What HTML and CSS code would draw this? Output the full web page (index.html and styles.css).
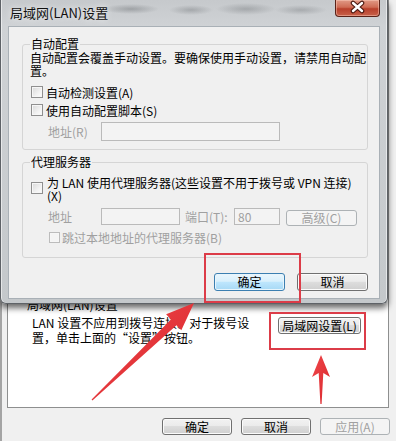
FILE: index.html
```html
<!DOCTYPE html>
<html lang="zh-CN">
<head>
<meta charset="utf-8">
<title>局域网(LAN)设置</title>
<link rel="stylesheet" href="styles.css">
</head>
<body>
<div class="screen">
  <div class="bgwin">
    <div class="panel">
      <div class="lan-title">局域网(LAN)设置</div>
      <div class="lan-row">
        <p class="lan-text">LAN 设置不应用到拨号连接。对于拨号设<br>置，单击上面的“设置”按钮。</p>
        <span class="btn lan-btn">局域网设置(L)</span>
      </div>
    </div>
    <div class="footer">
      <span class="btn foot-btn">确定</span>
      <span class="btn foot-btn">取消</span>
      <span class="btn foot-btn disabled">应用(A)</span>
    </div>
  </div>

  <div class="dialog">
    <div class="titlebar">
      <span class="title">局域网(LAN)设置</span>
      <span class="close">
        <svg width="45" height="17" viewBox="0 0 45 17">
          <path d="M18 4 L27 12 M27 4 L18 12" stroke="#4a1810" stroke-width="4.6" stroke-linecap="round" fill="none"/>
          <path d="M18 4 L27 12 M27 4 L18 12" stroke="#ffffff" stroke-width="2.4" stroke-linecap="round" fill="none"/>
        </svg>
      </span>
    </div>
    <div class="client">
      <fieldset class="group g1">
        <legend>自动配置</legend>
        <p class="desc">自动配置会覆盖手动设置。要确保使用手动设置，请禁用自动配<br>置。</p>
        <div class="check first"><span class="box"></span><span>自动检测设置(A)</span></div>
        <div class="check"><span class="box"></span><span>使用自动配置脚本(S)</span></div>
        <div class="field-row addr-row">
          <span class="lbl dim">地址(R)</span><span class="input w-addr"></span>
        </div>
      </fieldset>
      <fieldset class="group g2">
        <legend>代理服务器</legend>
        <div class="check two"><span class="box"></span><span>为 LAN 使用代理服务器(这些设置不用于拨号或 VPN 连接)<br>(X)</span></div>
        <div class="field-row proxy-row">
          <span class="lbl dim">地址</span><span class="input w-proxy"></span>
          <span class="lbl dim port-lbl">端口(T):</span><span class="input w-port">80</span>
          <span class="btn adv disabled">高级(C)</span>
        </div>
        <div class="check sub dim"><span class="box off"></span><span>跳过本地地址的代理服务器(B)</span></div>
      </fieldset>
      <div class="actions">
        <span class="btn dlg-btn default">确定</span>
        <span class="btn dlg-btn">取消</span>
      </div>
    </div>
  </div>

  <div class="mark mark-ok"></div>
  <div class="mark mark-lan"></div>

  <svg class="arrows" width="396" height="441" viewBox="0 0 396 441">
    <defs>
      <linearGradient id="rg" x1="0" y1="0" x2="1" y2="1">
        <stop offset="0" stop-color="#f0474a"/>
        <stop offset="1" stop-color="#d8262c"/>
      </linearGradient>
    </defs>
    <polygon fill="url(#rg)" points="194,303 181.3,330.3 176.5,325.2 92.4,400.5 91.6,399.5 170.9,319.4 166.1,314.3"/>
    <polygon fill="url(#rg)" points="321,355 330,377 323.3,373 321.6,404 320.4,404 318.7,373 312,377"/>
  </svg>
</div>
</body>
</html>
```

FILE: styles.css
```css
* { box-sizing: border-box; }

html, body {
  margin: 0;
  padding: 0;
}

body {
  width: 396px;
  height: 441px;
  overflow: hidden;
  background: #e6e6e6;
  font-family: "Noto Sans CJK SC", "Liberation Sans", sans-serif;
  font-size: 12px;
  color: #000;
}

.screen {
  position: relative;
  width: 396px;
  height: 441px;
  overflow: hidden;
}

/* ---------- background window (Internet options) ---------- */
.bgwin {
  position: absolute;
  inset: 0;
  background: #f0f0f0;
  border-left: 2px solid #a4a4a4;
  display: flex;
  flex-direction: column;
}

.panel {
  margin-left: 5px;
  width: 382px;
  height: 408px;
  flex: none;
  background: #fff;
  border: 1px solid #8e8f8f;
  border-top: 0;
  padding: 298px 0 0 19px;
}

.lan-title {
  line-height: 14px;
  color: #000;
}

.lan-row {
  display: flex;
  align-items: flex-start;
  padding-left: 5px;
  margin-top: 3px;
  margin-right: 27px;
}

.lan-text {
  margin: 0;
  line-height: 15px;
  white-space: nowrap;
}

.lan-btn {
  margin-left: auto;
  margin-top: 2px;
  width: 83px;
  height: 17px;
}

.footer {
  display: flex;
  justify-content: flex-end;
  gap: 9px;
  padding: 10px 6px 0 0;
}

.foot-btn {
  width: 70px;
  height: 17px;
}

/* ---------- buttons ---------- */
.btn {
  display: inline-flex;
  align-items: center;
  justify-content: center;
  flex: none;
  font-size: 12px;
  line-height: 1;
  color: #000;
  border: 1px solid #707070;
  border-radius: 3px;
  background: linear-gradient(#f2f2f2 0%, #ebebeb 46%, #dddddd 50%, #cfcfcf 100%);
  box-shadow: inset 0 0 0 1px #fbfbfb;
  white-space: nowrap;
}

.btn.disabled {
  color: #a0a0a0;
  border-color: #adb2b5;
  background: #f4f4f4;
  box-shadow: none;
}

.btn.default {
  border-color: #3c7fb1;
  background: linear-gradient(#eaf6fd 0%, #d9f0fc 46%, #bee6fd 50%, #a7d9f5 100%);
  box-shadow: inset 0 0 0 1px #e8f5fc;
}

/* ---------- dialog ---------- */
.dialog {
  position: absolute;
  left: 0;
  top: 0;
  width: 388px;
  height: 304px;
  display: flex;
  flex-direction: column;
  padding: 0 7px 4px 7px;
  border: 1px solid #5e6267;
  border-top: 0;
  border-radius: 0 0 6px 6px;
  background:
    radial-gradient(ellipse 28px 5px at 130px 9px, rgba(80, 84, 88, 0.35), transparent),
    radial-gradient(ellipse 22px 5px at 190px 10px, rgba(80, 84, 88, 0.3), transparent),
    radial-gradient(ellipse 30px 6px at 245px 9px, rgba(80, 84, 88, 0.3), transparent),
    radial-gradient(ellipse 26px 5px at 300px 10px, rgba(80, 84, 88, 0.28), transparent),
    linear-gradient(180deg, #c6c9cc 0px, #cfd2d5 26px, #c4c8cb 100%);
  box-shadow:
    inset 1px 0 0 rgba(255, 255, 255, 0.55),
    inset -1px 0 0 rgba(255, 255, 255, 0.55),
    0 4px 6px rgba(0, 0, 0, 0.6);
}

.titlebar {
  height: 26px;
  flex: none;
  display: flex;
  align-items: flex-start;
  justify-content: space-between;
}

.title {
  padding-left: 2px;
  font-size: 13px;
  line-height: 26px;
  color: #111;
  text-shadow: 0 0 6px rgba(255, 255, 255, 0.9);
}

.close {
  display: block;
  width: 45px;
  height: 17px;
  border: 1px solid #5a2218;
  border-top: 0;
  border-radius: 0 0 4px 4px;
  background: linear-gradient(#e19a86 0%, #cf6c55 45%, #b8402b 55%, #c8614a 100%);
  box-shadow: inset 0 0 0 1px rgba(255, 210, 195, 0.45);
}

.close svg {
  display: block;
  margin: -1px 0 0 -1px;
}

.client {
  flex: 1;
  background: #f0f0f0;
  border: 1px solid #a9b0b6;
  padding: 10px 11px 0 13px;
  display: flex;
  flex-direction: column;
}

.group {
  margin: 0;
  border: 1px solid #d5d5d5;
  border-radius: 3px;
  padding: 0 8px 8px 7px;
  min-width: 0;
}

.group legend {
  padding: 0 1px;
  line-height: 14px;
  font-size: 12px;
}

.g2 {
  margin-top: 5px;
  padding-bottom: 11px;
}

.desc {
  margin: 0;
  line-height: 13px;
  white-space: nowrap;
}

.check {
  display: flex;
  align-items: center;
  height: 18px;
  white-space: nowrap;
}

.check.first {
  margin-top: 6px;
}

.box {
  width: 12px;
  height: 12px;
  flex: none;
  margin: 0 3px 0 1px;
  border: 1px solid #8f8f8f;
  background: linear-gradient(135deg, #d8d8d8 0%, #f1f1f1 60%, #fdfdfd 100%);
  box-shadow: inset 0 0 0 1px #f6f6f6;
}

.box.off {
  border-color: #bcbcbc;
  background: #f4f4f4;
}

.check.two {
  height: auto;
  align-items: flex-start;
  margin-top: 7px;
  line-height: 13px;
}

.check.two .box {
  margin-top: 6px;
  margin-right: 4px;
}

.check.sub {
  margin-top: 3px;
}

.check.sub .box {
  margin-left: 19px;
  margin-right: 2px;
  width: 11px;
  height: 11px;
}

.dim {
  color: #a0a0a0;
}

.field-row {
  display: flex;
  align-items: center;
}

.addr-row {
  margin-top: 3px;
  height: 19px;
}

.lbl {
  flex: none;
  width: 53px;
  margin-left: 18px;
  white-space: nowrap;
}

.input {
  display: flex;
  align-items: center;
  flex: none;
  padding-left: 3px;
  border: 1px solid #bababa;
  background: #f3f3f3;
  color: #a0a0a0;
}

.w-addr {
  width: 179px;
  height: 19px;
}

.proxy-row {
  margin-top: 5px;
  height: 18px;
}

.w-proxy {
  width: 79px;
  height: 17px;
}

.port-lbl {
  width: 49px;
  margin-left: 5px;
}

.w-port {
  width: 46px;
  height: 17px;
}

.adv {
  width: 71px;
  height: 16px;
  margin-left: 6px;
  margin-top: 3px;
}

.actions {
  display: flex;
  justify-content: flex-end;
  gap: 12px;
  margin-top: 15px;
}

.dlg-btn {
  width: 71px;
  height: 18px;
}

/* ---------- annotations ---------- */
.mark {
  position: absolute;
  border: 2px solid #dc3c48;
}

.mark-ok {
  left: 204px;
  top: 253px;
  width: 97px;
  height: 50px;
}

.mark-lan {
  left: 269px;
  top: 312px;
  width: 97px;
  height: 38px;
}

.arrows {
  position: absolute;
  left: 0;
  top: 0;
  pointer-events: none;
}
```
